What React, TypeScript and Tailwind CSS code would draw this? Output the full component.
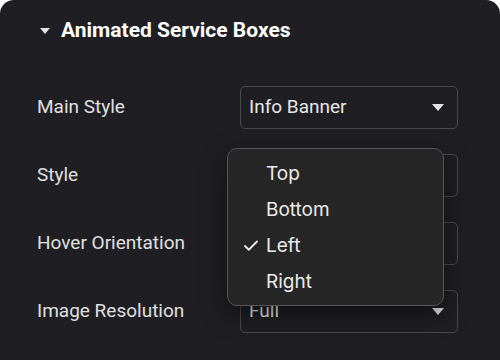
import { Check } from "lucide-react";

const rows = [
  { label: "Main Style", value: "Info Banner" },
  { label: "Style", value: "" },
  { label: "Hover Orientation", value: "" },
  { label: "Image Resolution", value: "Full" },
];

const options = ["Top", "Bottom", "Left", "Right"];

function Caret({ className }: { className?: string }) {
  return (
    <svg width="12" height="7" viewBox="0 0 12 7" className={className}>
      <path d="M0 0h12L6 7z" fill="#e5e5e5" />
    </svg>
  );
}

export default function App() {
  return (
    <div className="w-[500px] h-[360px] bg-white">
      <div
        className="relative w-full h-full bg-[#1f1f23] rounded-t-[14px] text-[#e6e6e6]"
        style={{ fontFamily: "Roboto, sans-serif" }}
      >
        <div className="flex items-center gap-[11px] pl-[40px] pt-[16px] h-[46px]">
          <Caret className="w-[10px] h-[6px]" />
          <span className="text-[21px] font-bold text-white">
            Animated Service Boxes
          </span>
        </div>
        <div className="flex flex-col gap-[25px] mt-[40px]">
          {rows.map((r) => (
            <div key={r.label} className="flex items-center pl-[37px] pr-[42px]">
              <span className="flex-1 text-[19px] text-[#e0e0e0]">{r.label}</span>
              <div className="w-[218px] h-[43px] rounded-[5px] border border-[#4a4a4e] flex items-center justify-between pl-[8px] pr-[13px]">
                <span className="text-[19px] text-[#e8e8e8]">{r.value}</span>
                <Caret />
              </div>
            </div>
          ))}
        </div>

        <div
          className="absolute left-[227px] top-[148px] w-[217px] h-[158px] rounded-[10px] border border-[#55555a] bg-[#262626] shadow-[0_8px_24px_rgba(0,0,0,0.5)] flex flex-col justify-center gap-[11px] pt-[2px]"
          style={{ fontFamily: "Inter, sans-serif" }}
        >
          {options.map((o) => (
            <div key={o} className="flex items-center h-[25px] text-[19px] text-[#ececec]">
              <span className="w-[38px] flex justify-start pl-[14px]">
                {o === "Left" && <Check size={18} strokeWidth={2.4} />}
              </span>
              <span>{o}</span>
            </div>
          ))}
        </div>
      </div>
    </div>
  );
}
